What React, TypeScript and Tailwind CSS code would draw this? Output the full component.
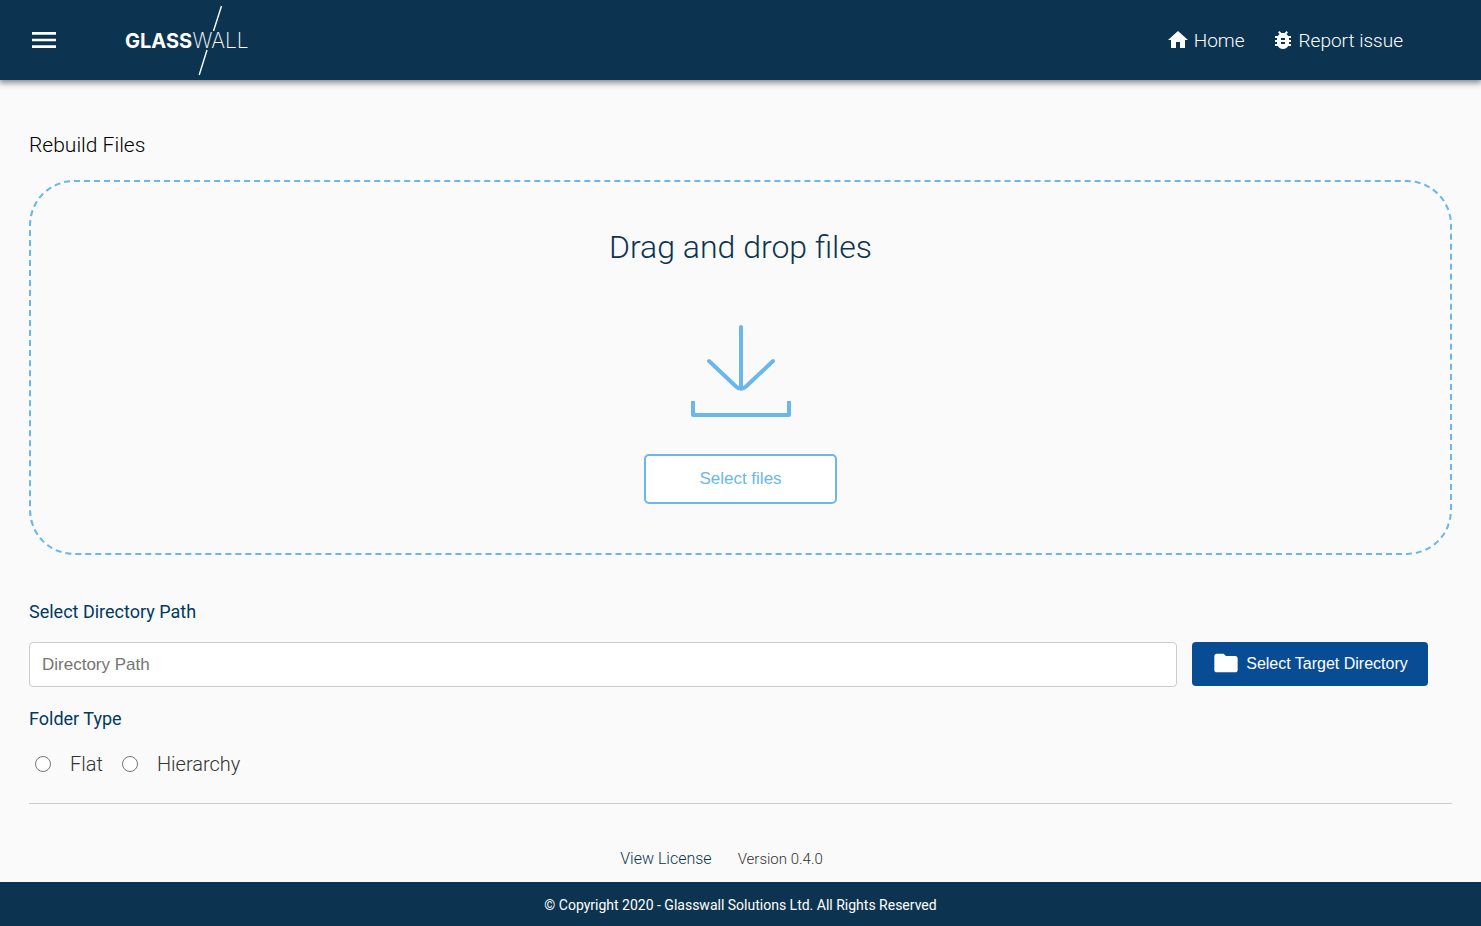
import { MdBugReport, MdFolder, MdHome, MdMenu } from "react-icons/md";

function Logo() {
  return (
    <svg viewBox="0 0 128 72" className="h-[72px] w-32" role="img" aria-label="Glasswall">
      <g fill="#ffffff" fontFamily="Inter, 'Open Sans', sans-serif">
        <text x="1" y="43.5" fontSize="20" fontWeight="700">GLASS</text>
        <text x="68.5" y="43.5" fontSize="21" fontWeight="200">WALL</text>
      </g>
      <path d="M97.5 2 L89.5 27 M83 46 L75.2 71" stroke="#ffffff" strokeWidth="1.4" fill="none" />
    </svg>
  );
}

function DownloadIcon() {
  return (
    <svg viewBox="0 0 100 92" className="h-[92px] w-[100px]" fill="none" stroke="#6ab7ee" strokeWidth="4" aria-hidden="true">
      <path d="M50 2 V63" strokeLinecap="round" />
      <path d="M18 36 L45 61.5 Q50 66 55 61.5 L82 36" strokeLinecap="round" />
      <path d="M2 76 V90 H98 V76" strokeLinejoin="round" />
    </svg>
  );
}

function FolderOption({ value, label }: { value: string; label: string }) {
  return (
    <label className="flex items-center gap-[19px]">
      <input
        type="radio"
        name="folder-type"
        value={value}
        className="size-4 appearance-none rounded-full border border-[#767676] bg-white checked:border-[5px] checked:border-[#0c3451]"
      />
      <span>{label}</span>
    </label>
  );
}

export default function App() {
  return (
    <div className="flex min-h-screen flex-col bg-[#fafafa] font-[Roboto,sans-serif] text-black">
      <header className="flex h-20 items-center bg-[#0c3451] pr-[78px] pl-7 text-white shadow-[0_2px_6px_1px_rgba(0,0,0,0.45)]">
        <button type="button" aria-label="Open menu" className="mr-16">
          <MdMenu size={32} />
        </button>
        <a href="#home">
          <Logo />
        </a>
        <nav className="ml-auto flex gap-[26px] text-[19px] font-light">
          <a href="#home" className="flex items-center gap-1">
            <MdHome size={24} />
            <span className="pt-0.5">Home</span>
          </a>
          <a href="#report" className="flex items-center gap-1">
            <MdBugReport size={24} />
            <span className="pt-0.5">Report issue</span>
          </a>
        </nav>
      </header>

      <main className="flex flex-1 flex-col px-[29px] pt-[51px]">
        <h1 className="text-[21px] leading-7 font-light">Rebuild Files</h1>

        <section className="mt-[21px] flex flex-col items-center rounded-[45px] border-2 border-dashed border-[#6ab7ee] pt-[45px] pb-[49px]">
          <h2 className="text-[32px] leading-10 font-light text-[#0c3451]">Drag and drop files</h2>
          <div className="mt-[58px]">
            <DownloadIcon />
          </div>
          <button
            type="button"
            className="mt-[37px] h-[50px] w-[193px] rounded-[5px] border-2 border-[#6ab7ee] bg-white font-['Liberation_Sans',Arial,sans-serif] text-[17px] text-[#6ab7ee]"
          >
            Select files
          </button>
        </section>

        <label htmlFor="directory-path" className="mt-[45px] text-lg leading-6 text-[#003962]">
          Select Directory Path
        </label>
        <div className="mt-[18px] mr-6 flex gap-[15px] font-['Liberation_Sans',Arial,sans-serif]">
          <input
            id="directory-path"
            type="text"
            placeholder="Directory Path"
            className="h-[45px] min-w-0 flex-1 rounded-[4px] border border-[#cccccc] bg-white px-3 text-[17px] placeholder:text-[#757575]"
          />
          <button type="button" className="flex h-11 w-[236px] items-center justify-center gap-1.5 rounded-[4px] bg-[#084c94] pb-0.5 text-base text-white">
            <MdFolder size={28} />
            <span className="pt-0.5">Select Target Directory</span>
          </button>
        </div>

        <fieldset className="mt-5">
          <legend className="text-lg leading-6 text-[#003962]">Folder Type</legend>
          <div className="mt-[19px] ml-1.5 flex gap-[19px] text-xl leading-7 font-light text-[#333333]">
            <FolderOption value="flat" label="Flat" />
            <FolderOption value="hierarchy" label="Hierarchy" />
          </div>
        </fieldset>

        <hr className="mt-[25px] border-[#cccccc]" />

        <div className="mt-auto flex items-center justify-center gap-[26px] pr-[38px] pb-[11px] font-light">
          <a href="#license" className="text-base text-[#0c3451]">View License</a>
          <span className="text-[15px] text-[#333333]">Version 0.4.0</span>
        </div>
      </main>

      <footer className="flex h-11 items-center justify-center bg-[#0c3451] pt-0.5 text-sm text-white">
        <p>© Copyright 2020 - Glasswall Solutions Ltd. All Rights Reserved</p>
      </footer>
    </div>
  );
}
